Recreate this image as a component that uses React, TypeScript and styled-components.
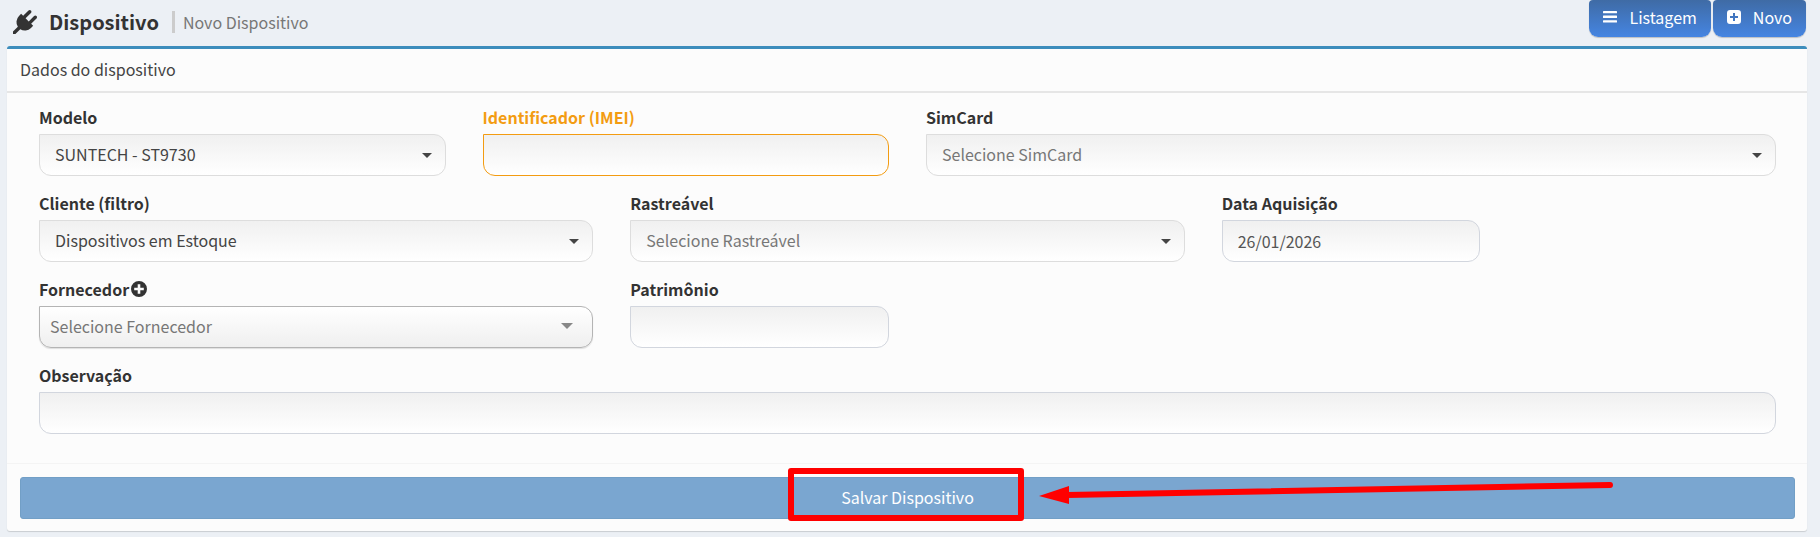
import React from "react";
import styled, { createGlobalStyle, css } from "styled-components";

const GlobalStyle = createGlobalStyle`
  *, *::before, *::after { box-sizing: border-box; }
  body {
    margin: 0;
    background: #ecf0f5;
    color: #333;
    font-family: "Noto Sans CJK SC", sans-serif;
    font-size: 16px;
    line-height: 24px;
  }
  button, input, select { font: inherit; color: inherit; }
`;

const Page = styled.main`
  padding: 0 13px 5px 7px;
`;

const PageHeader = styled.header`
  display: flex;
  justify-content: space-between;
  align-items: flex-start;
  height: 46px;
`;

const Heading = styled.div`
  display: flex;
  align-items: center;
  padding: 8px 0 0 6px;
`;

const Title = styled.h1`
  margin: 0 13px 0 12px;
  font-size: 20px;
  line-height: 28px;
  font-weight: 700;
`;

const Subtitle = styled.span`
  padding-left: 8px;
  border-left: 3px solid #ccc;
  color: #777;
  font-size: 16px;
  line-height: 22px;
`;

const Actions = styled.nav`
  display: flex;
  gap: 2px;
  padding-right: 1px;
`;

const ActionLink = styled.a`
  display: flex;
  align-items: center;
  gap: 12px;
  height: 37px;
  padding: 0 14px 3px;
  border-radius: 4px 4px 9px 9px;
  background: linear-gradient(#3f6ba5, #4585e2);
  box-shadow: 0 1px 1px rgba(0, 0, 0, 0.2);
  color: #fff;
  font-size: 16px;
  text-decoration: none;
`;

const Panel = styled.form`
  border-top: 3px solid #3c8dbc;
  border-radius: 3px;
  background: #fcfcfc;
  box-shadow: 0 1px 1px rgba(0, 0, 0, 0.15);
`;

const PanelTitle = styled.h2`
  margin: 0;
  padding: 8px 13px 10px;
  border-bottom: 2px solid #e6e6e6;
  color: #444;
  font-size: 16px;
  line-height: 24px;
  font-weight: 400;
`;

const Fields = styled.div`
  display: grid;
  grid-template-columns: repeat(12, minmax(0, 1fr));
  gap: 15px 37px;
  padding: 12px 31px 29px 32px;
`;

const Field = styled.div<{ $span: number }>`
  grid-column: span ${(p) => p.$span};
  display: flex;
  flex-direction: column;
  gap: 5px;
`;

const RowEnd = styled.div<{ $span: number }>`
  grid-column: span ${(p) => p.$span};
`;

const Label = styled.label<{ $warning?: boolean }>`
  display: flex;
  align-items: center;
  gap: 2px;
  color: ${(p) => (p.$warning ? "#f39c12" : "#333")};
  font-weight: 700;
  line-height: 24px;
`;

const control = css`
  display: block;
  width: 100%;
  height: 42px;
  margin: 0;
  padding: 0 15px;
  border-radius: 0 12px 12px 12px;
  background: linear-gradient(#f0f0f0, #fff);
  font-size: 16px;
  outline: none;
`;

const TextInput = styled.input<{ $warning?: boolean }>`
  ${control}
  border: 1px solid ${(p) => (p.$warning ? "#f39c12" : "#d2d6de")};
  color: #555;
`;

const SelectBox = styled.div<{ $raised?: boolean }>`
  display: grid;
  align-items: center;

  & > * { grid-area: 1 / 1; }

  svg {
    justify-self: end;
    margin-right: ${(p) => (p.$raised ? "20px" : "14px")};
    color: ${(p) => (p.$raised ? "#888" : "#444")};
    pointer-events: none;
  }
`;

const Select = styled.select<{ $empty?: boolean; $raised?: boolean }>`
  ${control}
  appearance: none;
  padding: 0 15px 2px;
  border: 1px solid #ddd;
  color: ${(p) => (p.$empty ? "#777" : "#444")};
  ${(p) =>
    p.$raised &&
    css`
      padding: 0 10px 2px;
      border-color: #b4b4b4;
      background: linear-gradient(#fff, #efefef);
      box-shadow: 0 1px 1px rgba(0, 0, 0, 0.12);
    `}
`;

const PanelFooter = styled.footer`
  padding: 13px 12px 12px 13px;
  border-top: 1px solid #f4f4f4;
`;

const SaveArea = styled.div`
  position: relative;
`;

const SaveButton = styled.button`
  display: block;
  width: 100%;
  height: 42px;
  padding: 0 0 3px;
  border: 1px solid #729fc6;
  border-radius: 3px;
  background: #7aa6d0;
  color: #fff;
`;

const Highlight = styled.div`
  position: absolute;
  top: -9px;
  left: calc(50% - 120px);
  width: 236px;
  height: 53px;
  border: 6px solid #f00;
  border-radius: 3px;
  pointer-events: none;
`;

const Arrow = styled.svg`
  position: absolute;
  top: 0;
  left: calc(50% + 131px);
  pointer-events: none;
`;

function PlugIcon() {
  return (
    <svg width="24" height="24" viewBox="0 0 1792 1792" fill="currentColor" aria-hidden="true">
      <path d="M1755 453q37 38 37 90.500t-37 90.500l-401 400 150 150-160 160q-163 163-389.500 186.500t-411.500-100.500l-362 362h-181v-181l362-362q-124-185-100.500-411.500t186.500-389.500l160-160 150 150 400-401q38-37 91-37t90 37 37 90.500-37 90.500l-400 401 234 234 401-400q38-37 91-37t90 37z" />
    </svg>
  );
}

function LinesIcon() {
  return (
    <svg width="14" height="12" viewBox="0 0 14 12" fill="currentColor" aria-hidden="true">
      <rect y="0" width="14" height="2.300" rx="0.500" />
      <rect y="4.600" width="14" height="2.300" rx="0.500" />
      <rect y="9.200" width="14" height="2.300" rx="0.500" />
    </svg>
  );
}

function PlusSquareIcon() {
  return (
    <svg width="14" height="14" viewBox="0 0 14 14" fill="currentColor" fillRule="evenodd" aria-hidden="true">
      <path d="M3 0h8a3 3 0 0 1 3 3v8a3 3 0 0 1-3 3H3a3 3 0 0 1-3-3V3a3 3 0 0 1 3-3ZM6 3v3H3v2h3v3h2V8h3V6H8V3Z" />
    </svg>
  );
}

function PlusCircleIcon() {
  return (
    <svg width="16" height="16" viewBox="0 0 16 16" fill="currentColor" fillRule="evenodd" aria-hidden="true">
      <path d="M8 0a8 8 0 1 1 0 16A8 8 0 0 1 8 0ZM6.700 3.200v3.500H3.200v2.600h3.500v3.500h2.600V9.300h3.500V6.700H9.300V3.200Z" />
    </svg>
  );
}

function Caret({ tall }: { tall?: boolean }) {
  return tall ? (
    <svg width="12" height="10" viewBox="0 0 12 10" fill="currentColor" aria-hidden="true">
      <path d="M0 1h12L6 7Z" />
    </svg>
  ) : (
    <svg width="10" height="5" viewBox="0 0 10 5" fill="currentColor" aria-hidden="true">
      <path d="M0 0h10L5 5Z" />
    </svg>
  );
}

type SelectFieldProps = {
  id: string;
  label: string;
  value: string;
  span: number;
  empty?: boolean;
  raised?: boolean;
  icon?: React.ReactNode;
};

function SelectField({ id, label, value, span, empty, raised, icon }: SelectFieldProps) {
  return (
    <Field $span={span}>
      <Label htmlFor={id}>
        {label}
        {icon}
      </Label>
      <SelectBox $raised={raised}>
        <Select id={id} $empty={empty} $raised={raised}>
          <option>{value}</option>
        </Select>
        <Caret tall={raised} />
      </SelectBox>
    </Field>
  );
}

type TextFieldProps = {
  id: string;
  label: string;
  span: number;
  value?: string;
  warning?: boolean;
};

function TextField({ id, label, span, value, warning }: TextFieldProps) {
  return (
    <Field $span={span}>
      <Label htmlFor={id} $warning={warning}>
        {label}
      </Label>
      <TextInput id={id} type="text" defaultValue={value} $warning={warning} />
    </Field>
  );
}

export default function App() {
  return (
    <>
      <GlobalStyle />
      <Page>
        <PageHeader>
          <Heading>
            <PlugIcon />
            <Title>Dispositivo</Title>
            <Subtitle>Novo Dispositivo</Subtitle>
          </Heading>
          <Actions>
            <ActionLink href="#listagem">
              <LinesIcon />
              Listagem
            </ActionLink>
            <ActionLink href="#novo">
              <PlusSquareIcon />
              Novo
            </ActionLink>
          </Actions>
        </PageHeader>
        <Panel onSubmit={(e) => e.preventDefault()}>
          <PanelTitle>Dados do dispositivo</PanelTitle>
          <Fields>
            <SelectField id="modelo" label="Modelo" value="SUNTECH - ST9730" span={3} />
            <TextField id="imei" label="Identificador (IMEI)" span={3} warning />
            <SelectField id="simcard" label="SimCard" value="Selecione SimCard" span={6} empty />
            <SelectField id="cliente" label="Cliente (filtro)" value="Dispositivos em Estoque" span={4} />
            <SelectField id="rastreavel" label="Rastreável" value="Selecione Rastreável" span={4} empty />
            <TextField id="data" label="Data Aquisição" value="26/01/2026" span={2} />
            <RowEnd $span={2} />
            <SelectField
              id="fornecedor"
              label="Fornecedor"
              value="Selecione Fornecedor"
              span={4}
              empty
              raised
              icon={<PlusCircleIcon />}
            />
            <TextField id="patrimonio" label="Patrimônio" span={2} />
            <RowEnd $span={6} />
            <TextField id="observacao" label="Observação" span={12} />
          </Fields>
          <PanelFooter>
            <SaveArea>
              <SaveButton type="submit">Salvar Dispositivo</SaveButton>
              <Highlight />
              <Arrow width="580" height="30" viewBox="0 0 580 30" aria-hidden="true">
                <path d="M28 18 571 8" stroke="#f00" strokeWidth="6" strokeLinecap="round" />
                <path d="M0 19 30 9V27Z" fill="#f00" />
              </Arrow>
            </SaveArea>
          </PanelFooter>
        </Panel>
      </Page>
    </>
  );
}
